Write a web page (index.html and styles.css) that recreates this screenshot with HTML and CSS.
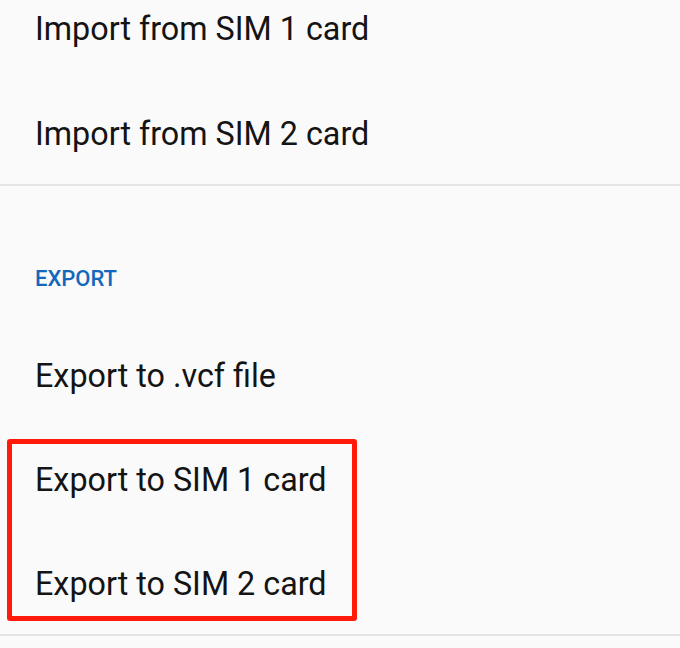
FILE: index.html
```html
<!DOCTYPE html>
<html lang="en">
<head>
<meta charset="utf-8">
<title>Import/Export contacts</title>
<link rel="stylesheet" href="styles.css">
</head>
<body>
<div class="screen">
  <ul class="list first">
    <li class="item">Import from SIM 1 card</li>
    <li class="item">Import from SIM 2 card</li>
  </ul>
  <section class="section">
    <h2 class="section-title">EXPORT</h2>
    <ul class="list">
      <li class="item">Export to .vcf file</li>
      <li class="item">Export to SIM 1 card</li>
      <li class="item">Export to SIM 2 card</li>
    </ul>
  </section>
  <div class="highlight"></div>
</div>
</body>
</html>
```

FILE: styles.css
```css
html, body {
  margin: 0;
  padding: 0;
  background: #fafafa;
}
body {
  font-family: Roboto, "Noto Sans", sans-serif;
  color: #141414;
  overflow: hidden;
}
.screen {
  position: relative;
  width: 680px;
  height: 648px;
  overflow: hidden;
}
.list {
  list-style: none;
  margin: 0;
  padding: 0;
}
.list.first {
  margin-top: -24px;
  border-bottom: 2px solid #e4e4e4;
}
.item {
  height: 104px;
  box-sizing: border-box;
  padding-top: 3px;
  display: flex;
  align-items: center;
  padding-left: 35px;
  font-size: 32.3px;
  line-height: 38px;
  font-weight: 400;
}
.list.first .item:first-child {
  padding-top: 2px;
}
.section {
  border-bottom: 2px solid #e4e4e4;
}
.section-title {
  margin: 0;
  height: 136px;
  box-sizing: border-box;
  padding: 80px 0 0 35px;
  font-size: 22px;
  line-height: 26px;
  font-weight: 500;
  color: #1368bd;
}
.highlight {
  position: absolute;
  left: 7px;
  top: 439px;
  width: 350px;
  height: 182px;
  box-sizing: border-box;
  border: 5.5px solid #ff1a0a;
  border-radius: 3px;
}
```
